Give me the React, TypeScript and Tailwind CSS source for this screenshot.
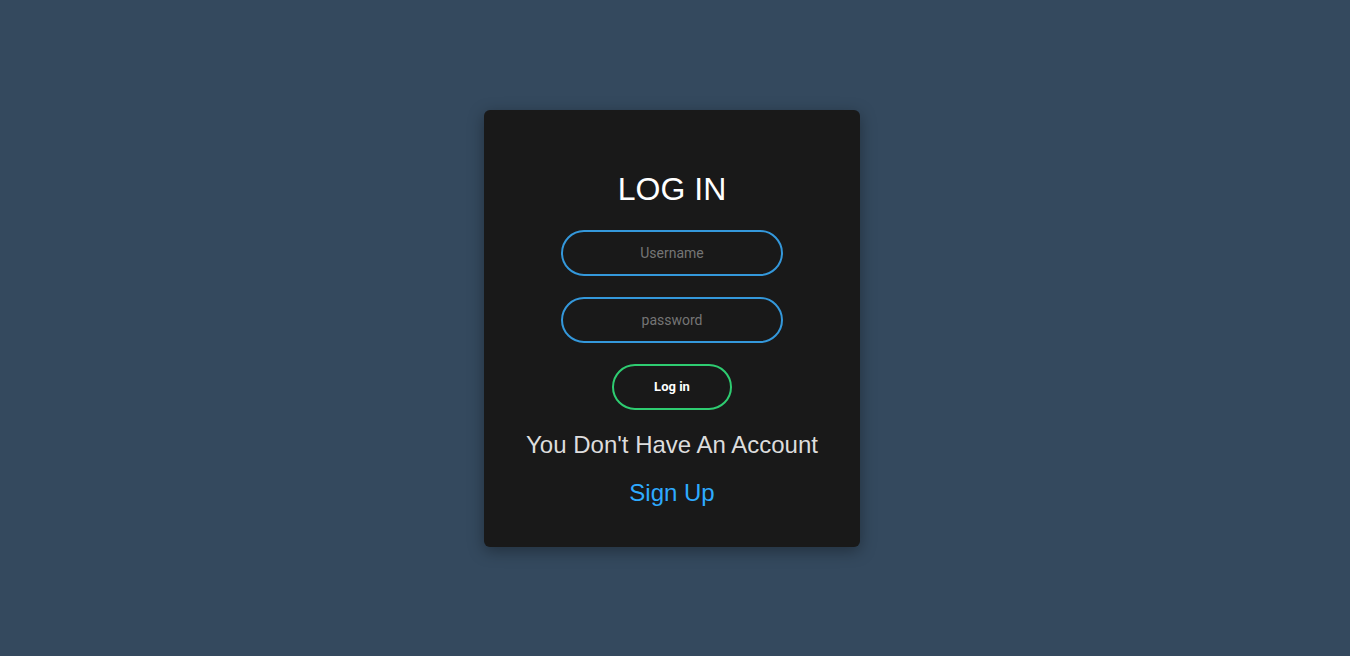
import React from "react";

export default function App() {
  return (
    <main className="flex min-h-[656px] w-full items-start justify-center bg-[#34495e] pt-[110px] pr-[6px] font-['Liberation_Sans',Arial,sans-serif]">
      <form
        className="flex w-[376px] flex-col items-center rounded-md bg-[#191919] pt-[61px] pb-10 shadow-[0_4px_16px_rgba(0,0,0,0.35)]"
        onSubmit={(e) => e.preventDefault()}
      >
        <h1 className="mb-[22px] text-[32px] leading-[37px] font-normal text-white uppercase">
          Log in
        </h1>
        <input
          type="text"
          placeholder="Username"
          className="h-[46px] w-[222px] rounded-[24px] border-2 border-[#3498db] bg-transparent px-[10px] text-center font-['Roboto',sans-serif] text-[14px] text-white outline-none placeholder:text-[#757575]"
        />
        <input
          type="password"
          placeholder="password"
          className="mt-[21px] h-[46px] w-[222px] rounded-[24px] border-2 border-[#3498db] bg-transparent px-[10px] text-center font-['Roboto',sans-serif] text-[14px] text-white outline-none placeholder:text-[#757575]"
        />
        <button
          type="submit"
          className="mt-[21px] h-[46px] w-[120px] rounded-[24px] border-2 border-[#2ecc71] bg-transparent font-['Roboto',sans-serif] text-[13px] font-bold text-white"
        >
          Log in
        </button>
        <p className="mt-[21px] text-[24px] leading-[28px] text-[#dddddd]">
          You Don't Have An Account
        </p>
        <a href="#" className="mt-[20px] text-[24px] leading-[28px] text-[#2eaaff]">
          Sign Up
        </a>
      </form>
    </main>
  );
}
